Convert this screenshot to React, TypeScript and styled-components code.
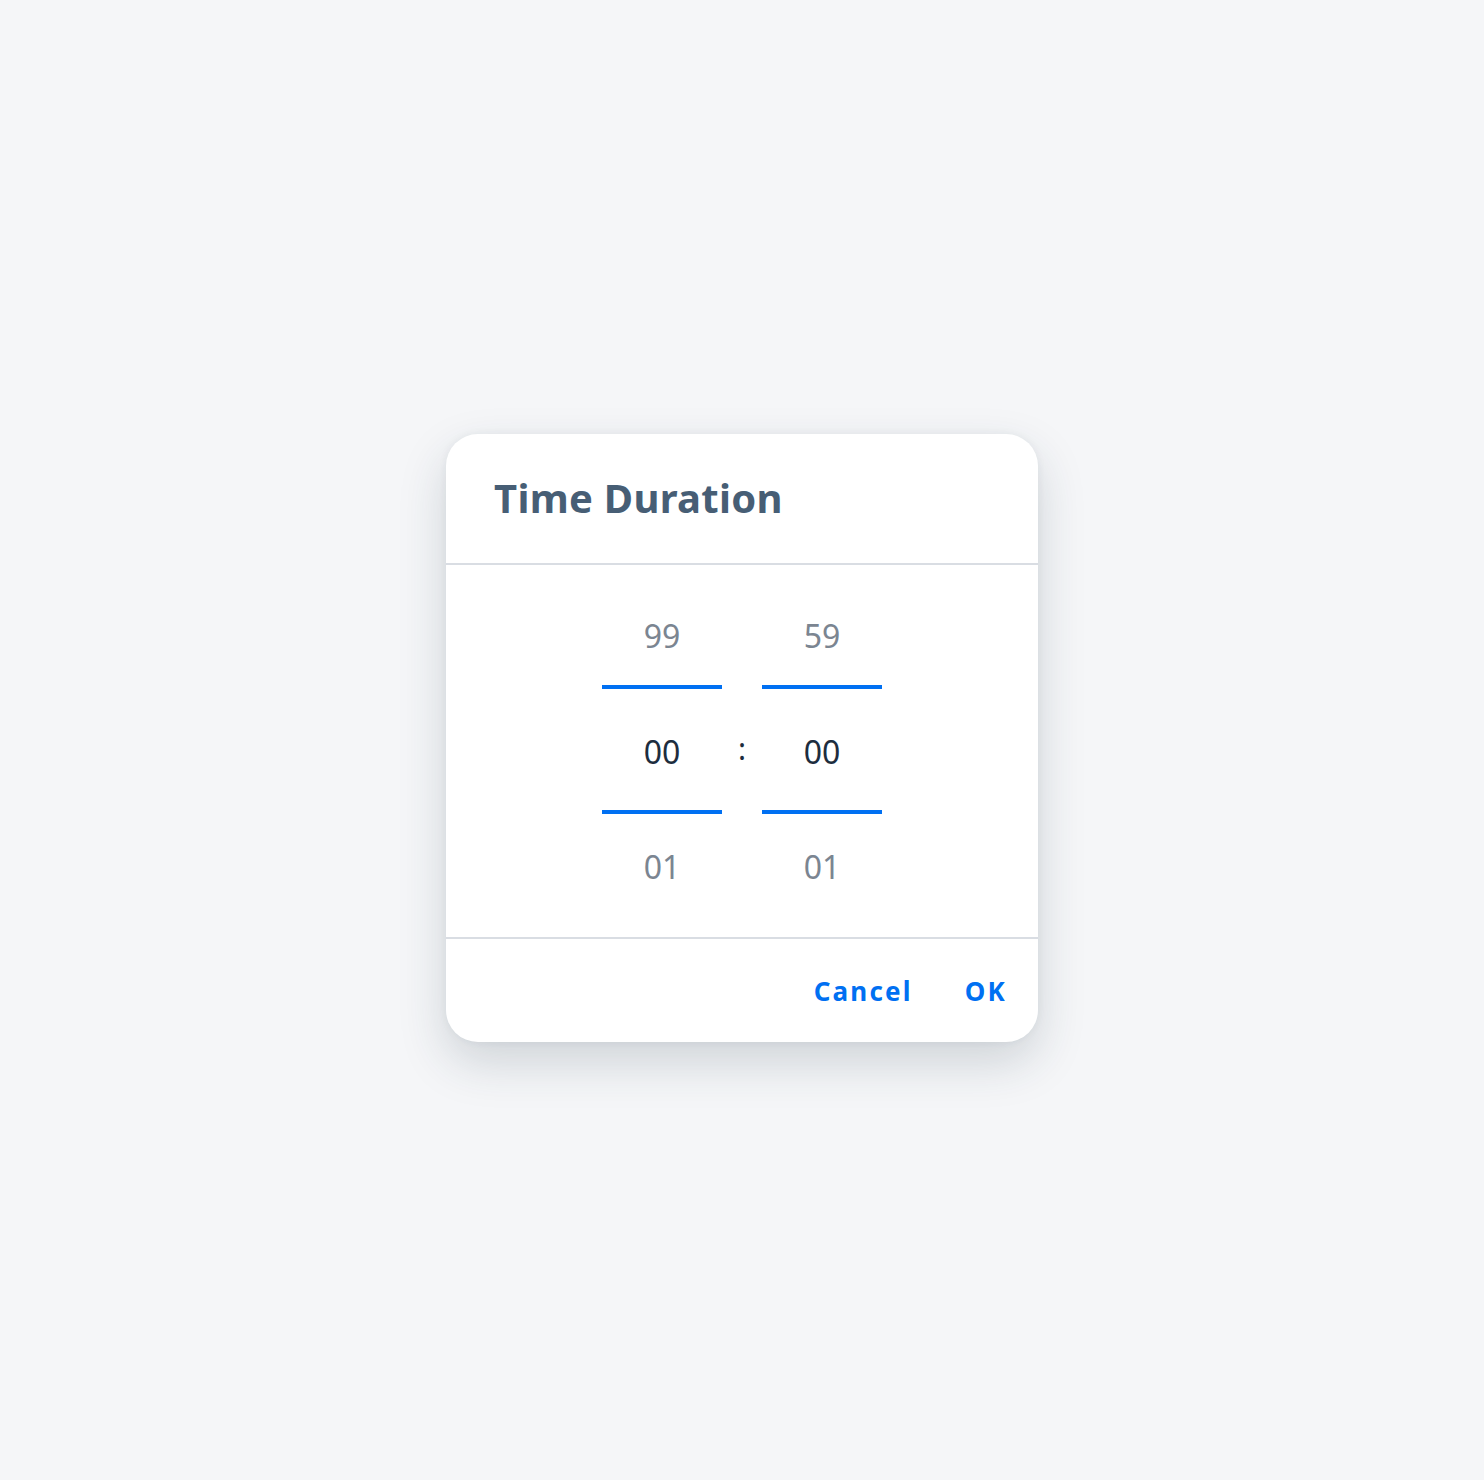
import { createGlobalStyle } from 'styled-components';
import styled from 'styled-components';

const GlobalStyle = createGlobalStyle`
  html, body {
    margin: 0;
    padding: 0;
    background: #f5f6f8;
    font-family: "Noto Sans", "Open Sans", sans-serif;
  }
`;

const Page = styled.div`
  width: 1484px;
  height: 1480px;
  display: flex;
  align-items: flex-start;
  justify-content: center;
  padding-top: 434px;
  box-sizing: border-box;
`;

const Dialog = styled.div`
  width: 592px;
  height: 608px;
  background: #fff;
  border-radius: 32px;
  box-shadow: 0 20px 48px rgba(34, 53, 72, 0.18), 0 0 8px rgba(34, 53, 72, 0.06);
  display: flex;
  flex-direction: column;
  overflow: hidden;
`;

const Header = styled.div`
  height: 131px;
  box-sizing: border-box;
  padding: 0 48px 2px;
  display: flex;
  align-items: center;
  border-bottom: 2px solid #d9dde3;
`;

const Title = styled.h1`
  margin: 0;
  font-size: 40px;
  font-weight: 700;
  color: #475e75;
  letter-spacing: 0.3px;
`;

const Body = styled.div`
  flex: 1;
  display: flex;
  justify-content: center;
  padding-top: 20px;
  border-bottom: 2px solid #d9dde3;
`;

const Column = styled.div`
  width: 120px;
  display: flex;
  flex-direction: column;
`;

const Cell = styled.div<{ $selected?: boolean; $h: number }>`
  height: ${(p) => p.$h}px;
  box-sizing: border-box;
  padding-top: ${(p) => (p.$selected ? 3 : 0)}px;
  display: flex;
  align-items: center;
  justify-content: center;
  font-size: 32px;
  color: ${(p) => (p.$selected ? '#1d2d3e' : '#7b8591')};
`;

const Bar = styled.div`
  height: 4px;
  background: #0070f2;
`;

const Separator = styled.div`
  width: 40px;
  height: 104px;
  margin-top: 111px;
  display: flex;
  align-items: center;
  justify-content: center;
  font-size: 30px;
  color: #1d2d3e;
`;

const Footer = styled.div`
  height: 103px;
  display: flex;
  align-items: center;
  justify-content: flex-end;
  gap: 52px;
  padding: 0 31px 0 0;
`;

const TextButton = styled.button`
  border: none;
  background: none;
  padding: 0;
  font-family: inherit;
  font-size: 26px;
  font-weight: 700;
  letter-spacing: 2.2px;
  color: #0070f2;
  cursor: pointer;
`;

const Spinner = ({ above, value, below }: { above: string; value: string; below: string }) => (
  <Column>
    <Cell $h={100}>{above}</Cell>
    <Bar />
    <Cell $h={121} $selected>
      {value}
    </Cell>
    <Bar />
    <Cell $h={104}>{below}</Cell>
  </Column>
);

export default function App() {
  return (
    <>
      <GlobalStyle />
      <Page>
        <Dialog>
          <Header>
            <Title>Time Duration</Title>
          </Header>
          <Body>
            <Spinner above="99" value="00" below="01" />
            <Separator>:</Separator>
            <Spinner above="59" value="00" below="01" />
          </Body>
          <Footer>
            <TextButton>Cancel</TextButton>
            <TextButton>OK</TextButton>
          </Footer>
        </Dialog>
      </Page>
    </>
  );
}
